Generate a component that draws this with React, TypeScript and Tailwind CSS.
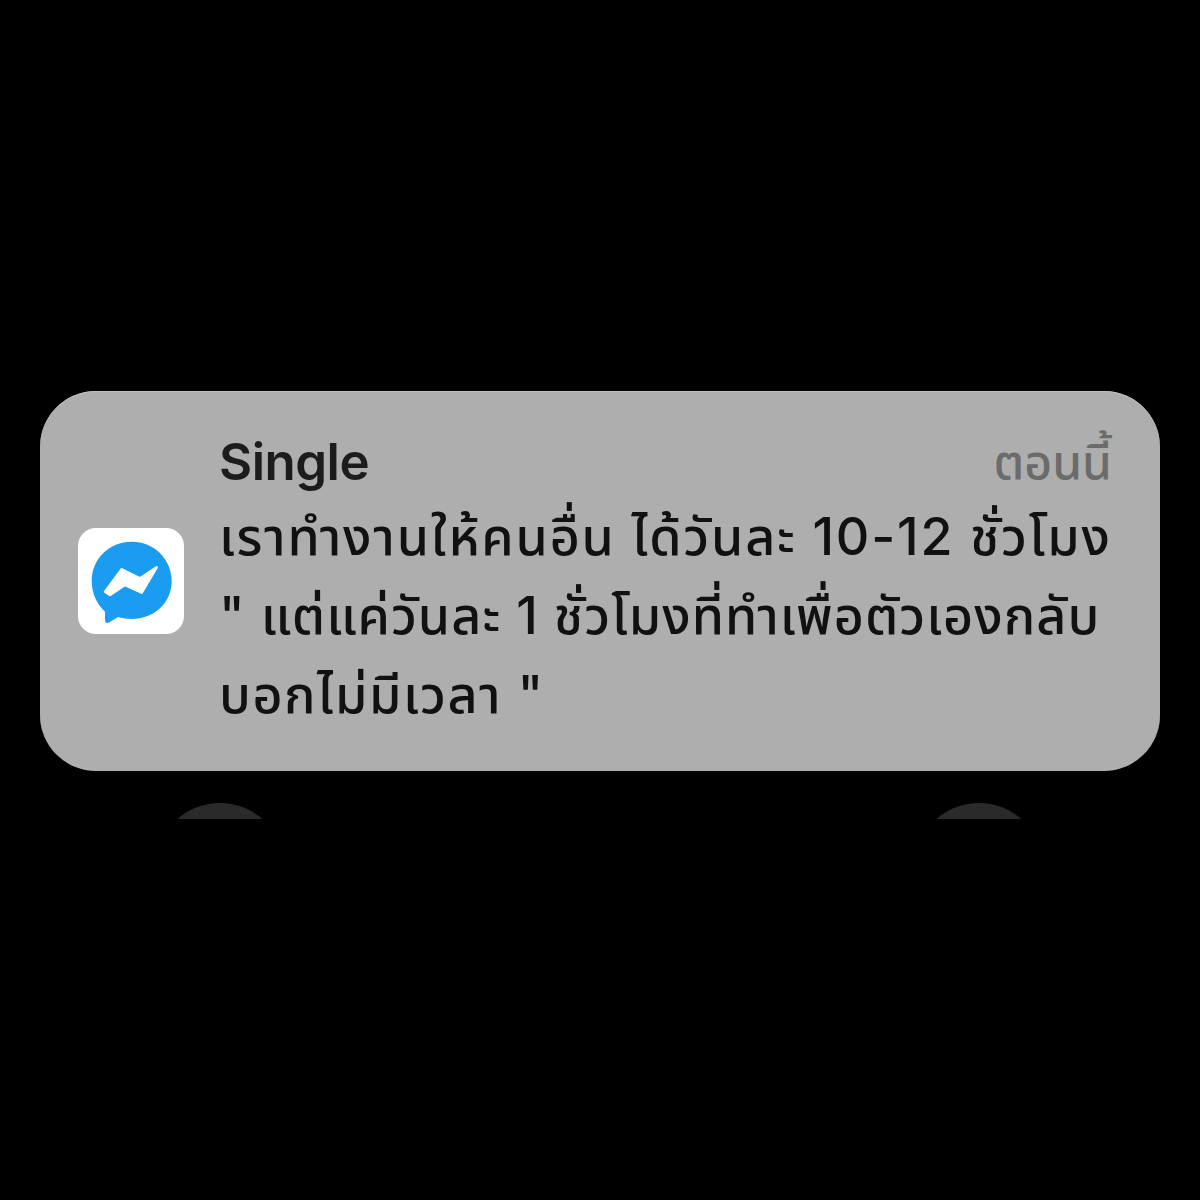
import React from "react";

export default function App() {
  const thai = "font-['Inter','Noto_Sans','Noto_Sans_Thai',sans-serif]";
  return (
    <div className={`w-[1200px] h-[1200px] bg-black flex flex-col pt-[391px] px-[40px] ${thai}`}>
      <div className="w-[1120px] h-[380px] rounded-[56px] bg-[#aeaeae] shadow-[inset_0_1px_0_#c0c0c0] flex items-center pl-[38px] pr-[48px]">
        <div className="w-[106px] h-[106px] rounded-[18px] bg-white flex items-center justify-center shrink-0">
          <svg width="84" height="84" viewBox="0 0 84 84">
            <path d="M42.700 2.700C20 2.700 2.700 20 2.700 42c0 12.500 5.300 23.500 13.300 30.700V81c0 2.500 2 3.500 4 2.500l9-5.500c4.300 1.300 8.800 2 13.700 2 22.700 0 40-16.500 40-38S65.400 2.700 42.700 2.700z" fill="#1a9cf0" />
            <path d="M16 52.700L32.700 30.300L51 39.300L67.700 28.300L52.700 53.700L36 46L21 56Z" fill="#fff" stroke="#fff" strokeWidth="2.500" strokeLinejoin="round" />
          </svg>
        </div>
        <div className="ml-[35px] flex-1 min-w-0 flex flex-col">
          <div className="flex justify-between items-start h-[68px] pt-[1px]">
            <span className="text-[51px] font-semibold text-[#1c1c1c] leading-[64px] tracking-[-0.5px]">Single</span>
            <span className="text-[48px] font-medium text-[#6b6b6b] leading-[64px]">ตอนนี้</span>
          </div>
          <p className="text-[52px] font-medium leading-[79px] text-[#111] whitespace-nowrap tracking-[1.8px]">เราทำงานให้คนอื่น ได้วันละ 10-12 ชั่วโมง</p>
          <p className="text-[52px] font-medium leading-[79px] text-[#111] whitespace-nowrap tracking-[1.05px]">" แต่แค่วันละ 1 ชั่วโมงที่ทำเพื่อตัวเองกลับ</p>
          <p className="text-[52px] font-medium leading-[79px] text-[#111] whitespace-nowrap tracking-[1.5px]">บอกไม่มีเวลา "</p>
        </div>
      </div>
      <div className="flex justify-between pl-[116px] pr-[117px] mt-[32px] h-[16px] overflow-hidden">
        <div className="w-[128px] h-[128px] rounded-full bg-[#2a2a2a]" />
        <div className="w-[128px] h-[128px] rounded-full bg-[#2a2a2a]" />
      </div>
    </div>
  );
}
